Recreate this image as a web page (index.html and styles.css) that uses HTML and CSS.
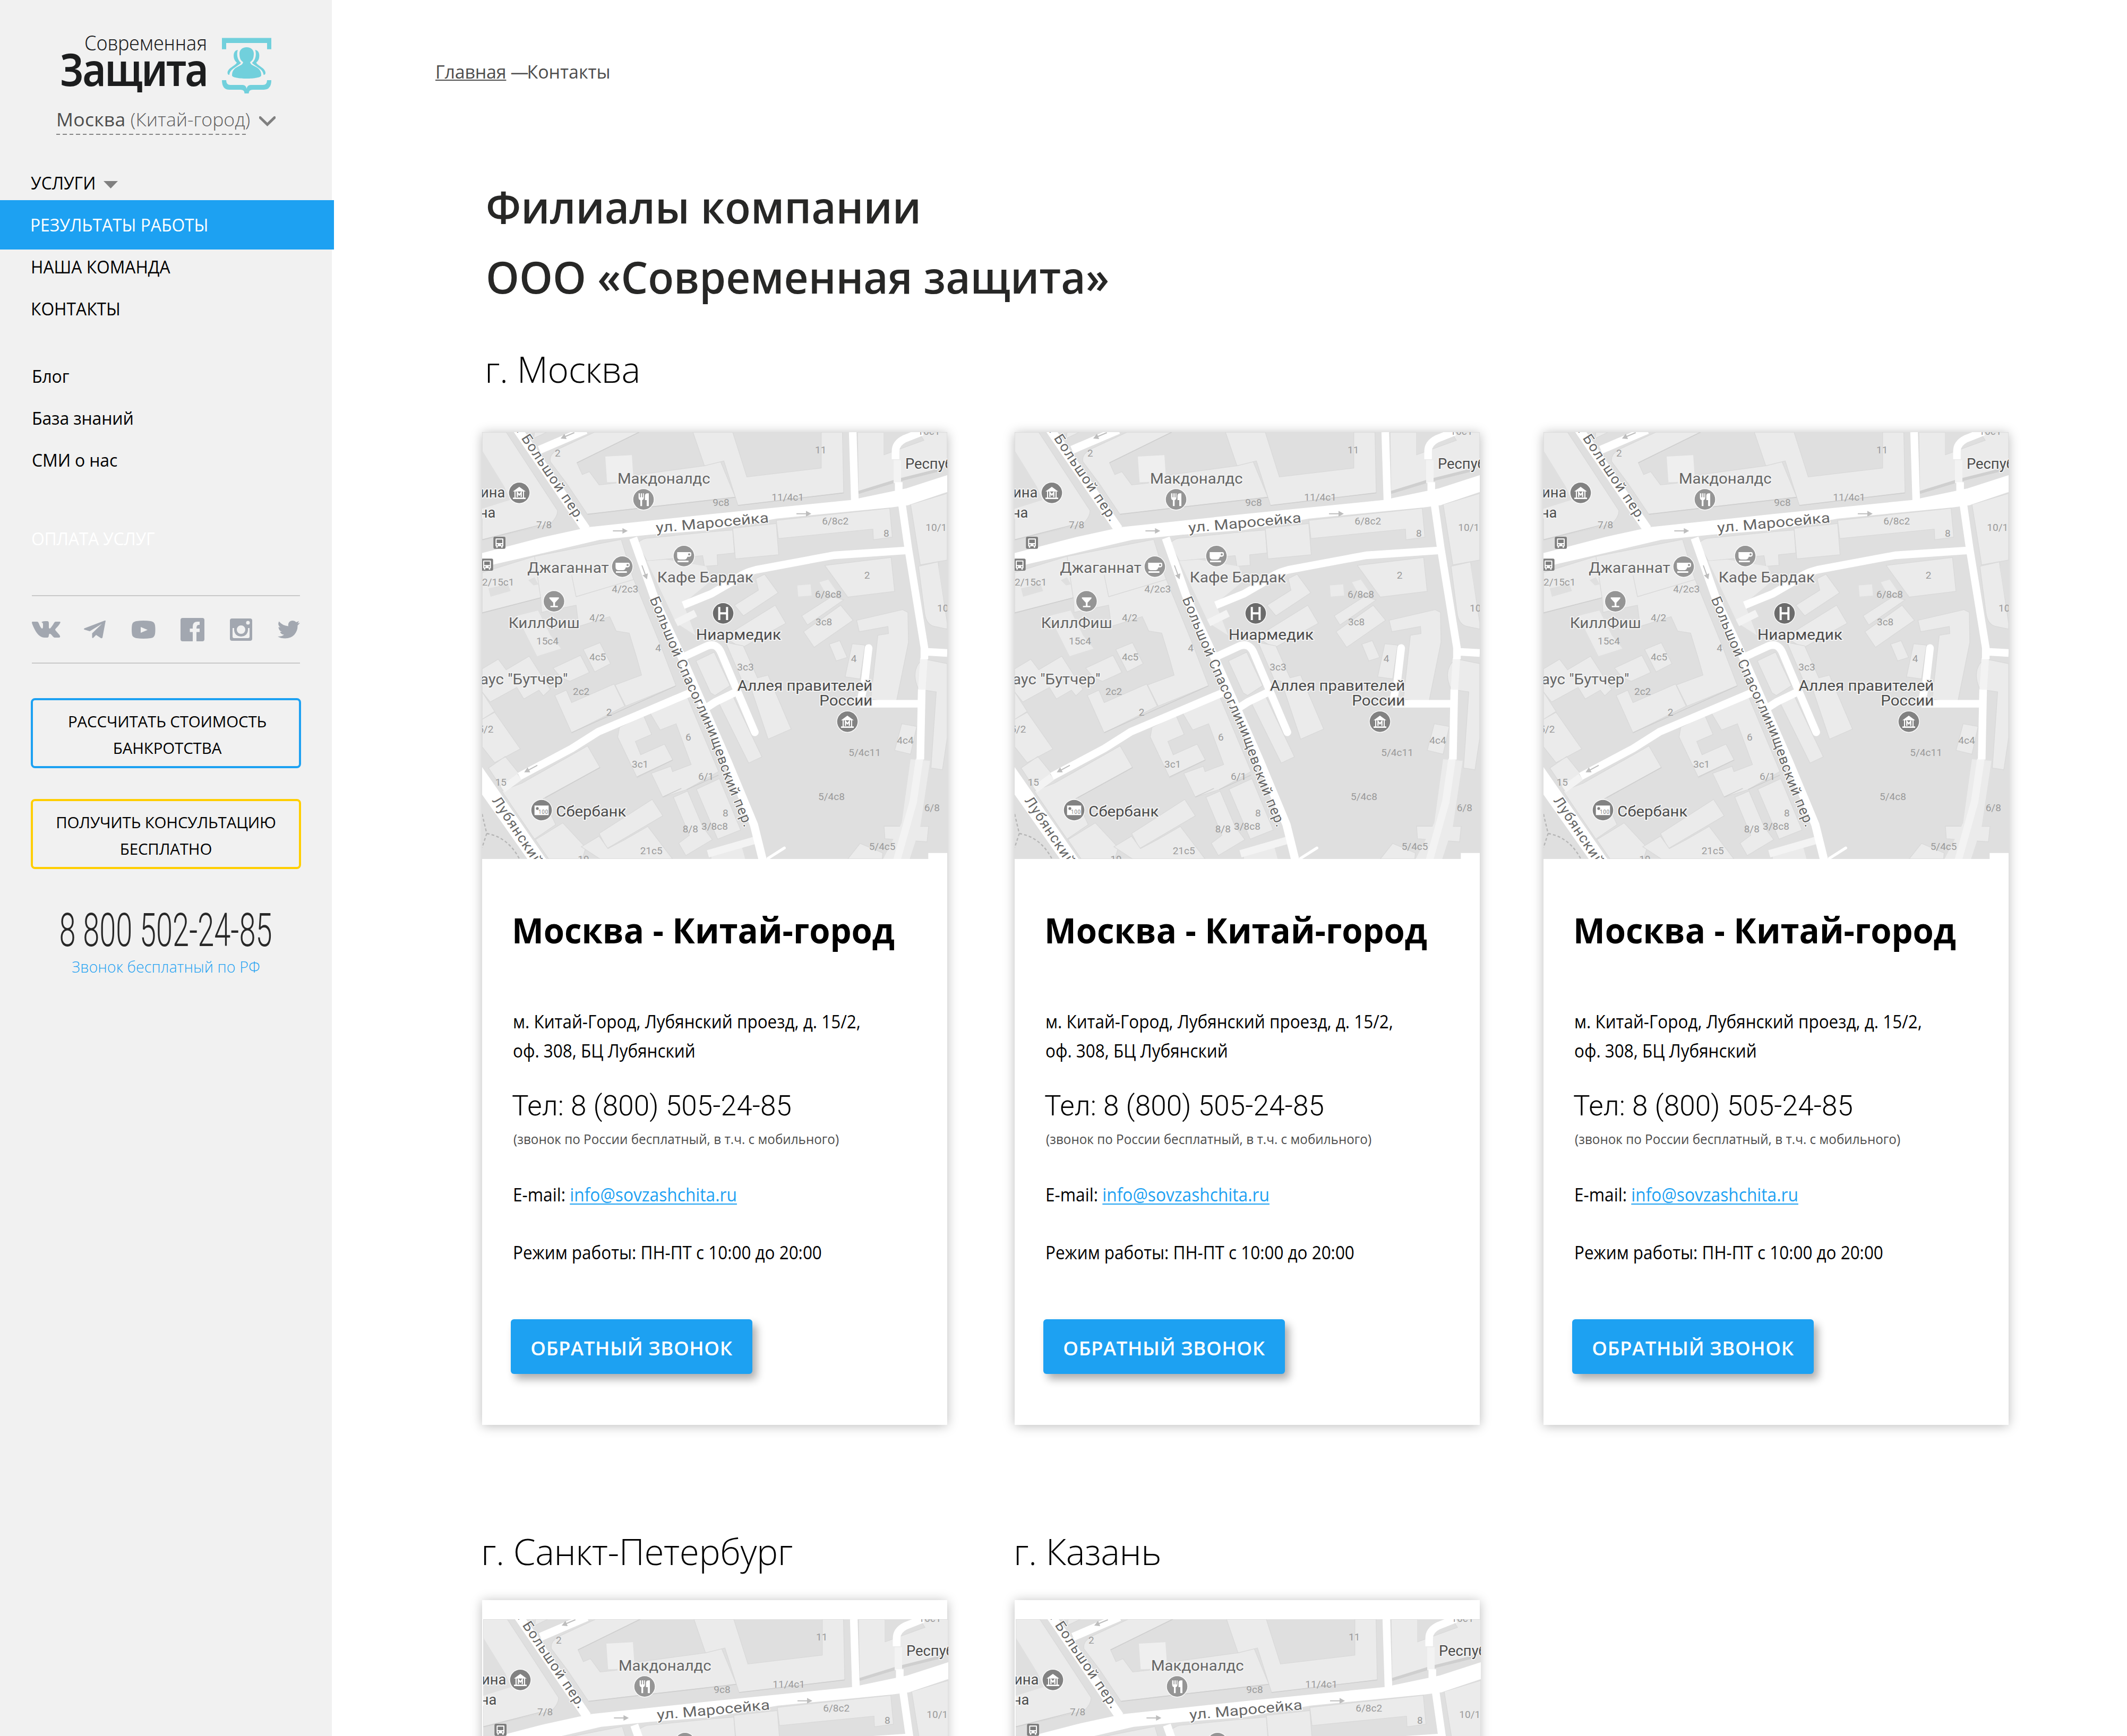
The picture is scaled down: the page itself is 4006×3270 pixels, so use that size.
FILE: index.html
```html
<!DOCTYPE html>
<html lang="ru">
<head>
<meta charset="utf-8">
<title>Контакты — Современная защита</title>
<link rel="stylesheet" href="styles.css">
</head>
<body>
<svg class="defs" width="0" height="0" aria-hidden="true">
  <defs>
    <path id="p-bolshoy" d="M232,12 L292,104 L600,560"/>
    <path id="p-spas" d="M1000,985 L1150,1345 L1340,1760 L1430,2020 L1545,2300"/>
    <path id="p-lub" d="M108,2124 L400,2560"/>
    <g id="museum"><circle r="62" fill="#fff"/><circle r="58" fill="#828282"/><path d="M-36,-8 L0,-34 L36,-8 Z M-27,-8 h6 v36 h-6 z M21,-8 h6 v36 h-6 z M-36,27 h72 v8 h-72 z" fill="#fff"/><path d="M-11,24 V-2 L0,12 L11,-2 V24" fill="none" stroke="#fff" stroke-width="7"/></g>
    <g id="cup"><circle r="62" fill="#fff"/><circle r="58" fill="#959595"/><path d="M-38,-22 h72 q8,0 8,8 v6 q0,10 -12,12 h-10 q-4,16 -18,16 h-22 q-18,0 -18,-18 z M-36,26 h62 v9 h-62 z" fill="#fff"/><circle cx="30" cy="-9" r="6" fill="#959595"/></g>
    <g id="bus"><rect width="68" height="68" rx="8" fill="#7d7d7d"/><path d="M12,14 q0,-4 4,-4 h36 q4,0 4,4 v40 h-4 v8 h-8 v-8 h-20 v8 h-8 v-8 h-4 z" fill="#fff"/><rect x="18" y="16" width="32" height="20" fill="#7d7d7d"/><circle cx="22" cy="46" r="4" fill="#7d7d7d"/><circle cx="46" cy="46" r="4" fill="#7d7d7d"/></g>
    <path id="arrow" d="M0,-3 H54 V-16 L84,0 L54,16 V3 H0 Z" fill="#bdbdbd"/>
  </defs>
  <symbol id="map" viewBox="54 42 2628 2412">
    <rect x="54" y="42" width="2628" height="2412" fill="#dfdfdf"/>
    <g fill="#ebebeb" stroke="#d9d9d9" stroke-width="4">
      <path d="M54,42 H190 L480,485 Q482,520 440,560 L54,652 Z"/>
      <path d="M345,78 L350,42 H420 Z"/>
      <path d="M440,210 Q430,170 480,140 L690,42 H942 L590,215 L620,282 L660,265 L715,340 L810,330 V300 L1310,232 L1400,205 L1485,410 L825,485 L650,508 L530,330 Z"/>
      <path d="M1245,42 H1470 L1550,295 L1970,245 V42 H2090 L2097,385 L1500,457 L1485,410 L1420,205 L1310,232 Z"/>
      <path d="M2175,42 H2325 V170 L2550,88 L2520,42 H2682 V240 L2180,388 Z"/>
      <path d="M54,835 L345,745 L840,648 L905,860 L1060,1240 L1150,1475 L865,1590 L805,1470 L955,1415 L930,1325 L885,1178 L812,1166 L775,1085 L600,1140 L585,1020 L390,1060 L385,978 L54,1065 Z"/>
      <path d="M350,742 L385,978 M585,972 L910,875 M585,972 L560,850" fill="none"/>
      <path d="M250,1080 L370,1050 L440,1190 L500,1265 L365,1308 Z" stroke="none"/>
      <path d="M930,670 Q960,640 1000,640 L1350,605 L1470,595 L1480,725 L1382,735 L1385,795 L1310,800 L1300,740 L1090,760 L985,770 Z"/>
      <path d="M1090,762 L1320,800 L1350,880 L1190,1010 L1260,1190 L1150,1120 L985,770 Z" stroke="none"/>
      <path d="M1470,585 L1716,558 L1730,735 L1485,758 Z"/>
      <path d="M1716,540 L2357,472 L2372,635 L2265,650 L2262,590 L1728,643 Z"/>
      <path d="M2475,450 L2682,388 V765 L2530,792 Z"/>
      <path d="M2520,800 L2630,775 L2682,1120 V1155 L2610,1140 Q2565,1130 2555,1070 Z"/>
      <path d="M1990,795 L2365,750 L2385,942 L2120,974 Z"/>
      <path d="M1835,908 L1910,902 L1916,965 L1840,971 Z M1960,890 L2010,875 L2062,950 L2000,962 Z" stroke="none"/>
      <path d="M1600,870 L1650,845 L1727,950 L1530,1080 L1480,1020 L1615,935 Z"/>
      <path d="M1420,1200 L1710,1020 L1770,1122 L1520,1262 Z"/>
      <path d="M1860,1080 L2030,970 L2097,990 L1892,1132 Z M1870,1170 L2080,1020 L2150,1105 L1930,1258 Z"/>
      <path d="M2170,1105 L2430,1045 L2460,1060 L2463,1230 L2392,1580 L2250,1550 L2290,1190 L2350,1180 L2347,1140 L2185,1170 Z"/>
      <path d="M2015,1240 L2075,1220 L2117,1315 L2055,1335 Z M2145,1238 L2218,1245 L2190,1437 L2105,1425 Z"/>
      <path d="M1430,1230 L1530,1250 L1610,1430 L1670,1415 L1800,1720 L1670,1777 L1560,1450 L1520,1440 Z"/>
      <path d="M1390,1570 L1470,1530 L1635,1877 L1560,1912 Z"/>
      <path d="M1262,1335 L1365,1285 L1455,1475 L1370,1530 L1345,1515 Z"/>
      <path d="M54,1380 L145,1325 L190,1385 L320,1308 L440,1495 L400,1532 L375,1500 L290,1550 L250,1485 L100,1567 L54,1510 Z"/>
      <path d="M54,1510 L125,1620 L54,1665 Z M54,1665 L125,1625 L270,1832 L125,1910 L54,1820 Z M90,1940 L185,1875 L262,1970 L170,2060 Z"/>
      <path d="M455,1375 L610,1303 L660,1400 L550,1450 L500,1430 Z M625,1270 L720,1232 L780,1350 L690,1397 Z"/>
      <path d="M465,1530 L530,1500 L560,1570 L800,1465 L860,1590 L560,1742 Z"/>
      <path d="M830,1710 L965,1640 L1012,1750 L920,1790 L950,1865 L1085,1805 L1132,1895 L930,1995 L820,1765 Z"/>
      <path d="M1000,1625 L1210,1530 L1390,1960 L1210,2062 L1075,2105 L1010,1970 L1120,1930 L1130,1960 L1235,1920 L1150,1690 L1060,1725 Z"/>
      <path d="M165,2070 L280,2025 L650,1815 L720,1937 L400,2112 L470,2260 L350,2342 Z"/>
      <path d="M355,2345 L510,2250 L640,2390 L620,2454 H430 Z M715,2310 L1015,2117 L1075,2210 L760,2395 Z"/>
      <path d="M615,2385 L715,2325 L765,2395 L860,2345 L990,2270 L1130,2454 H720 Z"/>
      <path d="M1135,2105 L1215,2070 L1300,2270 L1355,2345 L1205,2435 L1165,2365 L1225,2320 Z M1265,2060 L1395,2000 L1515,2290 L1385,2342 Z"/>
      <path d="M2425,1690 L2510,1705 L2475,1862 L2385,1840 Z"/>
      <path d="M2325,2268 L2577,2270 L2568,2357 L2330,2340 Z M2120,2454 L2190,2366 L2318,2420 L2315,2454 Z"/>
      <path d="M2475,1890 L2585,1900 L2530,2270 L2470,2454 H2320 L2425,2250 Z" stroke="none"/>
      <path d="M1350,2420 L1520,2380 L1540,2454 H1350 Z" stroke="none"/>
    </g>
    <g fill="#dfdfdf">
      <path d="M54,145 L180,350 L212,425 L54,475 Z"/>
      <path d="M90,925 L200,900 L215,940 L102,972 Z M315,878 L350,862 L372,902 L345,908 Z M865,650 L840,645 L930,895 L955,880 Z"/>
      <path d="M2325,42 H2395 L2372,150 L2325,168 Z"/>
      <path d="M2630,800 L2682,780 V1090 Z"/>
    </g>
    <path d="M750,180 L900,172 L910,320 L760,325 Z" fill="#efefef"/>
    <g fill="none" stroke="#cfcfcf" stroke-width="5">
      <path d="M590,215 L942,42 M650,506 L1485,410 M54,650 L370,570 M54,1063 L385,978 M1500,456 L2097,385 M560,1740 L1148,1476 M410,2108 L720,1937 M930,1990 L1130,1895 M1075,2104 L1180,2055 M1210,2062 L1390,1980"/>
      <path d="M2180,383 L2400,315 L2640,255" stroke-width="17"/>
    </g>
    <g fill="none" stroke="#f3f3f3" stroke-width="42">
      <path d="M2400,200 V330 M2550,1320 L2538,1510 M2525,1890 L2490,2130 L2395,2470 M1330,2425 L1590,2350 M1150,1120 L1260,1065"/>
      <path d="M170,2060 L265,1990"/>
    </g>
    <path d="M2570,1328 L2682,1350 V1770 L2655,1950 L2590,1940 L2620,1510 L2520,1495 Q2480,1410 2520,1350 Q2540,1325 2570,1328 Z" fill="#ebebeb" stroke="#d9d9d9" stroke-width="4"/>
    <path d="M2550,1325 L2538,1505" stroke="#f3f3f3" stroke-width="42"/>
    <g fill="none" stroke="#fff" stroke-width="43" stroke-linejoin="round">
      <path d="M250,20 L640,590" stroke-width="52"/>
      <path d="M378,142 L640,30" stroke-width="46"/>
      <path d="M2148,42 L2160,430 M2390,195 V150 Q2390,105 2440,80 L2540,40 M2408,325 V400"/>
      <path d="M2425,440 L2462,700 L2553,1260 V1325 M2560,1283 L2682,1290 M2538,1497 L2530,1892"/>
      <path d="M2460,710 L2040,738 L1600,820 Q1520,840 1480,880 L1350,955 L1190,1020"/>
      <path d="M908,640 L1035,1000 L1190,1330 L1370,1740 L1440,1900 L1590,2260 L1642,2470" stroke-width="46"/>
      <path d="M265,1987 L560,1830 L710,1735 L1000,1612 L1240,1510 M1320,1600 L1375,1565 L1490,1510"/>
      <path d="M1200,1308 L1325,1250 Q1380,1230 1405,1290 L1595,1738" stroke-linecap="round"/>
      <path d="M2238,1262 L2215,1460 L2192,1560" stroke-linecap="round"/>
      <path d="M2190,1577 H2540"/>
      <path d="M1670,2450 L1762,2392" stroke-width="16" stroke-linecap="round"/>
    </g>
    <path d="M54,725 L400,635 L660,578 L1350,505 L2140,425 L2210,410 L2450,360 L2682,285 V380 L2460,455 L2360,468 L1720,530 L1350,595 L1000,622 L720,650 L400,725 L54,805 Z" fill="#fff"/>
    <path d="M54,1935 L415,2454 H310 L54,2090 Z M2575,2420 H2682 V2454 H2575 Z" fill="#fff"/>
    <path d="M54,2200 L80,2310 L54,2390 M80,2310 Q200,2330 265,2454" fill="none" stroke="#b5b5b5" stroke-width="7" stroke-dasharray="16 12"/>
    <use href="#arrow" x="793" y="600"/><use href="#arrow" x="1830" y="503"/>
    <use href="#arrow" transform="translate(575 45) rotate(157)"/>
    <use href="#arrow" transform="translate(957 795) rotate(70)"/>
    <use href="#arrow" transform="translate(366 1925) rotate(152)"/>

    <g class="map-num">
      <text x="465" y="180">2</text><text x="360" y="585">7/8</text><text x="54" y="910">2/15с1</text><text x="787" y="948">4/2с3</text><text x="660" y="1110">4/2</text><text x="360" y="1243">15с4</text>
      <text x="1357" y="458">9с8</text><text x="1690" y="428">11/4с1</text><text x="1935" y="163">11</text><text x="1975" y="565">6/8с2</text><text x="2322" y="633">8</text><text x="2560" y="600">10/1</text><text x="2213" y="870">2</text><text x="1935" y="978">6/8с8</text><text x="1938" y="1133">3с8</text><text x="2625" y="1055">10</text><text x="2515" y="57">16с1</text>
      <text x="660" y="1333">4с5</text><text x="1033" y="1282">4</text><text x="567" y="1528">2с2</text><text x="755" y="1645">2</text><text x="118" y="1740" text-anchor="end">5/2</text><text x="1203" y="1785">6</text><text x="900" y="1938">3с1</text><text x="1275" y="2008">6/1</text><text x="128" y="2040">15</text><text x="1187" y="2305">8/8</text><text x="1293" y="2290">3/8с8</text><text x="947" y="2428">21с5</text><text x="595" y="2474">19</text>
      <text x="1495" y="1390">3с3</text><text x="2138" y="1340">4</text><text x="2398" y="1802">4с4</text><text x="2125" y="1872">5/4с11</text><text x="1953" y="2120">5/4с8</text><text x="1413" y="2215">8</text><text x="2552" y="2183">6/8</text><text x="2240" y="2402">5/4с5</text>
    </g>
    <g class="map-street">
      <text textLength="640" lengthAdjust="spacingAndGlyphs" transform="translate(1038 610) rotate(-5.2)">ул. Маросейка</text>
      <text><textPath href="#p-bolshoy" textLength="650">й Большой пер.</textPath></text>
      <text><textPath href="#p-spas" textLength="1400">Большой Спасоглинищевский пер.</textPath></text>
      <text><textPath href="#p-lub" textLength="445">Лубянский</textPath></text>
    </g>
    <g class="map-place">
      <text x="819" y="332" textLength="524" lengthAdjust="spacingAndGlyphs">Макдоналдс</text>
      <text class="map-dark" x="184" y="412" text-anchor="end">ина</text><text class="map-dark" x="130" y="525" text-anchor="end">на</text>
      <text x="310" y="838" textLength="460" lengthAdjust="spacingAndGlyphs">Джаганнат</text><text x="1043" y="890" textLength="544" lengthAdjust="spacingAndGlyphs">Кафе Бардак</text><text x="203" y="1148" textLength="402" lengthAdjust="spacingAndGlyphs">КиллФиш</text>
      <text class="map-dark" x="2445" y="250">Респуб</text>
      <text class="map-dark" x="1263" y="1215" textLength="480" lengthAdjust="spacingAndGlyphs">Ниармедик</text>
      <text x="42" y="1467" textLength="496" lengthAdjust="spacingAndGlyphs">аус "Бутчер"</text>
      <text class="map-dark" x="472" y="2213" textLength="396" lengthAdjust="spacingAndGlyphs">Сбербанк</text>
      <text class="map-dark" x="1496" y="1502" textLength="764" lengthAdjust="spacingAndGlyphs">Аллея правителей</text><text class="map-dark" x="1960" y="1588" textLength="300" lengthAdjust="spacingAndGlyphs">России</text>
    </g>
    <use href="#museum" x="264" y="385"/><use href="#museum" x="2118" y="1678"/>
    <use href="#cup" x="846" y="802"/><use href="#cup" x="1194" y="742"/>
    <use href="#bus" x="118" y="633"/><use href="#bus" x="48" y="757"/>
    <g transform="translate(966 422)"><circle r="62" fill="#fff"/><circle r="58" fill="#959595"/><path d="M-28,-34 v24 q0,12 10,14 V38 h10 V4 q10,-2 10,-14 v-24 h-5 v22 h-5 v-22 h-7 v22 h-5 v-22 z M8,-20 q0,-14 14,-14 h8 V38 h-12 V4 h-10 z" fill="#fff"/></g>
    <g transform="translate(460 998)"><circle r="62" fill="#fff"/><circle r="58" fill="#959595"/><path d="M-26,-22 h54 v6 l-22,24 v18 h16 v7 h-42 v-7 h16 V8 l-22,-24 z" fill="#fff"/></g>
    <g transform="translate(1416 1066)"><circle r="62" fill="#fff"/><circle r="58" fill="#6b6b6b"/><path d="M-28,-36 h12 v30 h32 v-30 h12 v74 h-12 V6 h-32 v32 h-12 z" fill="#fff"/></g>
    <g transform="translate(390 2178)"><circle r="62" fill="#fff"/><circle r="58" fill="#828282"/><rect x="-40" y="-26" width="80" height="54" fill="#fff"/><circle cx="-24" cy="-9" r="8" fill="#828282"/><text x="-18" y="20" font-family="Roboto, sans-serif" font-size="30" textLength="54" fill="#828282">100</text></g>
  </symbol>
</svg>

<div class="layout">
  <aside class="sidebar">
    <svg class="logo" viewBox="0 60 625 125" width="625" height="125" role="img" aria-label="Современная Защита">
      <text class="logo-top" x="159" y="94.5" textLength="231" lengthAdjust="spacingAndGlyphs">Современная</text>
      <text class="logo-main" x="113" y="162" textLength="277" lengthAdjust="spacingAndGlyphs">Защита</text>
      <g fill="#71d0dc">
        <path d="M418,71.5 H511 V92.7 H503 V81 H426 V92.7 H418 Z"/>
        <path d="M418,151 H426 Q426,160 434,160 H457 Q463,160 464.500,167 Q466,160 472,160 H495 Q503,160 503,151 H511 Q511,169 497,169 H476 Q468.500,169 468.500,176 H460.500 Q460.500,169 453,169 H432 Q418,169 418,151 Z"/>
        <path d="M464.500,89 C473,89 478,94 478,101 C478,109 476,114 471,117 C472,121 474,122 480,125 C488,129 492,133 492,142 C492,150 437,150 437,142 C437,133 441,129 449,125 C455,122 457,121 458,117 C453,114 451,109 451,101 C451,94 456,89 464.500,89 Z"/>
        <path d="M448,94 C440,95 439,104 441,111 C442,114 444,116 446,118 C443,124 429,128 428.500,137 C428.500,140 430,141 432,141 C433,130 445,127 454,118.500 C447,113 445,102 448,94 Z"/>
        <path d="M480.500,94 C488.500,95 489.500,104 487.500,111 C486.500,114 484.500,116 482.500,118 C485.500,124 499.500,128 500,137 C500,140 498.500,141 496.500,141 C495.500,130 483.500,127 474.500,118.500 C481.500,113 483.500,102 480.500,94 Z"/>
      </g>
    </svg>

    <div class="city">
      <a class="city-link"><span class="city-name">Москва</span> <span class="city-area">(Китай-город)</span></a>
      <svg width="31" height="20" viewBox="0 0 31 20"><path d="M2,2.500 L15.500,15.500 L29,2.500" fill="none" stroke="#808080" stroke-width="5" stroke-linecap="round"/></svg>
    </div>

    <nav class="nav">
      <a class="nav-item"><span>УСЛУГИ</span> <svg class="caret" width="27" height="14" viewBox="0 0 27 14"><path d="M0,0 H27 L13.500,14 Z" fill="#808080"/></svg></a>
      <a class="nav-item active"><span>РЕЗУЛЬТАТЫ РАБОТЫ</span></a>
      <a class="nav-item"><span>НАША КОМАНДА</span></a>
      <a class="nav-item"><span>КОНТАКТЫ</span></a>
    </nav>
    <nav class="subnav">
      <a>Блог</a><a>База знаний</a><a>СМИ о нас</a>
    </nav>
    <a class="pay">ОПЛАТА УСЛУГ</a>

    <div class="social">
      <svg width="54" height="32" viewBox="0 0 54 32"><path d="M1,1 H10 Q12,1 13,4 Q16,12 19,14 Q21,14 21,10 V6 Q21,3 18,2 Q20,0 25,0 H29 Q32,0 32,4 V12 Q33,16 36,12 Q40,7 42,3 Q43,1 45,1 H52 Q55,1 53,4 Q51,8 45,14 Q43,16 45,18 L52,26 Q55,31 51,31 H43 Q41,31 38,27 Q33,21 32,26 Q32,31 29,31 H24 Q13,31 5,15 Q1,7 0,3 Q0,1 1,1 Z"/></svg>
      <svg width="42" height="34" viewBox="0 0 42 34"><path d="M41,0 L35,32 Q34,34 32,33 L23,27 L17,33 Q15,33 15.500,30 V24 L34,6 L11,20 L1,17 Q-1,16 1,14.500 L39,0 Q41,-1 41,0 Z"/></svg>
      <svg width="45" height="34" viewBox="0 0 45 34"><path fill-rule="evenodd" d="M9,1 Q22,-1 36,1 Q43,2 44,9 Q45,17 44,25 Q43,32 36,33 Q22,35 9,33 Q1,32 .500,25 Q-.500,17 .500,9 Q1,2 9,1 Z M17,12 V23 L30,17.500 Z"/></svg>
      <svg width="45" height="44" viewBox="0 0 45 44"><path d="M4,0 H41 Q45,0 45,4 V40 Q45,44 41,44 H30 V26.500 H36 V20 H30 Q30,13 34,13 H36 V7 H32 Q23,7 23,16 V20 H17.500 V26.500 H23 V44 H4 Q0,44 0,40 V4 Q0,0 4,0 Z"/></svg>
      <svg width="42" height="42" viewBox="0 0 42 42"><path fill-rule="evenodd" d="M4,0 H38 Q42,0 42,4 V38 Q42,42 38,42 H4 Q0,42 0,38 V4 Q0,0 4,0 Z M5,18 V34 Q5,37 8,37 H34 Q37,37 37,34 V18 H34 Q35,33 21,34 Q7,33 8,18 Z M21,13 A8,8 0 1 0 21,29 A8,8 0 1 0 21,13 Z M34,4.500 A3.500,3.500 0 1 0 34,11.500 A3.500,3.500 0 1 0 34,4.500 Z"/></svg>
      <svg width="42" height="34" viewBox="0 0 42 34"><path d="M42,4 Q40,7 37.500,9 Q38,19 31,27 Q25,33 14,33.500 Q6,33.500 0,30 Q8,30 12,26.500 Q6,26 4.500,21 H8 Q2,19 1.500,12 L5,13 Q-1,8 2.500,1.500 Q9,9.500 20,10.500 Q19,3 25,.5 Q31,-1 35,3 L40,1 Q39,4 37,5.500 Z"/></svg>
    </div>

    <div class="actions">
      <a class="outline blue">РАССЧИТАТЬ СТОИМОСТЬ<br>БАНКРОТСТВА</a>
      <a class="outline yellow">ПОЛУЧИТЬ КОНСУЛЬТАЦИЮ<br>БЕСПЛАТНО</a>
    </div>
    <svg class="phone" width="625" height="80" viewBox="0 1712 625 80"><text x="111.500" y="1782" textLength="401" lengthAdjust="spacingAndGlyphs">8 800 502-24-85</text></svg>
    <p class="phone-note">Звонок бесплатный по РФ</p>
  </aside>

  <main class="main">
    <div class="crumbs"><a>Главная</a> <span><span class="dash">—</span>Контакты</span></div>
    <h1 class="title">Филиалы компании<br>ООО «Современная защита»</h1>
    <h2 class="town town-first">г. Москва</h2>
    <div class="grid">
      <article class="card">
        <svg class="map"><use href="#map"/></svg>
        <div class="card-body">
          <h3>Москва - Китай-город</h3>
          <p class="addr">м. Китай-Город, Лубянский проезд, д. 15/2,<br>оф. 308, БЦ Лубянский</p>
          <p class="tel">Тел: 8 (800) 505-24-85</p>
          <p class="note">(звонок по России бесплатный, в т.ч. с мобильного)</p>
          <p class="mail">E-mail: <a>info@sovzashchita.ru</a></p>
          <p class="hours">Режим работы: ПН-ПТ с 10:00 до 20:00</p>
          <a class="call">ОБРАТНЫЙ ЗВОНОК</a>
        </div>
      </article>
      <article class="card">
        <svg class="map"><use href="#map"/></svg>
        <div class="card-body">
          <h3>Москва - Китай-город</h3>
          <p class="addr">м. Китай-Город, Лубянский проезд, д. 15/2,<br>оф. 308, БЦ Лубянский</p>
          <p class="tel">Тел: 8 (800) 505-24-85</p>
          <p class="note">(звонок по России бесплатный, в т.ч. с мобильного)</p>
          <p class="mail">E-mail: <a>info@sovzashchita.ru</a></p>
          <p class="hours">Режим работы: ПН-ПТ с 10:00 до 20:00</p>
          <a class="call">ОБРАТНЫЙ ЗВОНОК</a>
        </div>
      </article>
      <article class="card">
        <svg class="map"><use href="#map"/></svg>
        <div class="card-body">
          <h3>Москва - Китай-город</h3>
          <p class="addr">м. Китай-Город, Лубянский проезд, д. 15/2,<br>оф. 308, БЦ Лубянский</p>
          <p class="tel">Тел: 8 (800) 505-24-85</p>
          <p class="note">(звонок по России бесплатный, в т.ч. с мобильного)</p>
          <p class="mail">E-mail: <a>info@sovzashchita.ru</a></p>
          <p class="hours">Режим работы: ПН-ПТ с 10:00 до 20:00</p>
          <a class="call">ОБРАТНЫЙ ЗВОНОК</a>
        </div>
      </article>
    </div>
    <div class="grid grid-second">
      <section>
        <h2 class="town">г. Санкт-Петербург</h2>
        <article class="card card-gap"><svg class="map"><use href="#map"/></svg></article>
      </section>
      <section>
        <h2 class="town">г. Казань</h2>
        <article class="card card-gap"><svg class="map"><use href="#map"/></svg></article>
      </section>
    </div>
  </main>
</div>
</body>
</html>
```
FILE: styles.css
```css
* { box-sizing: border-box; }
body, h1, h2, h3, p { margin: 0; }
body { background: #fff; color: #000; font-family: "Open Sans", "Noto Sans", sans-serif; }
svg { display: block; }
.defs { position: absolute; }
.layout { display: flex; height: 3270px; overflow: hidden; }

/* Sidebar */
.sidebar { width: 625px; flex: none; background: #f1f1f1; padding-top: 60px; }
.logo text { fill: #1c1d1e; }
.logo-top { font-size: 38px; font-weight: 300; font-family: "Noto Sans", sans-serif; }
.logo-main { font-size: 85px; font-weight: 600; font-family: "Noto Sans", sans-serif; letter-spacing: -3px; }
.city { display: flex; align-items: flex-start; margin: 14px 0 0 106px; }
.city svg { margin: 20px 0 0 20px; }
.city-link {
  width: 362px; height: 55px; line-height: 50px; font-size: 35.5px; white-space: nowrap;
  background: repeating-linear-gradient(90deg, #858585 0 7.5px, transparent 7.5px 12.5px) 0 100% / 100% 2px no-repeat;
}
.city-name { color: #4d4d4d; letter-spacing: .3px; }
.city-area { color: #606060; font-weight: 300; }
.nav { margin-top: 71px; }
.nav-item { display: flex; align-items: center; width: 625px; padding-left: 58px; font-size: 33px; line-height: 40px; }
.nav-item span { transform: scaleX(.963); transform-origin: 0 0; }
.nav-item + .nav-item { margin-top: 39px; }
.caret { margin: 5px 0 0 10px; }
.nav .active { width: 629px; margin-top: 12px; padding: 27px 0 26px 57px; background: #1da1f2; color: #fff; }
.nav .active + .nav-item { margin-top: 13px; }
.subnav { display: flex; flex-direction: column; gap: 39px; margin: 87px 0 0 60px; font-size: 32px; line-height: 40px; letter-spacing: -.15px; }
.pay { display: block; margin: 108px 0 0 59px; font-size: 32px; line-height: 40px; letter-spacing: -.3px; color: #fff; }
.social {
  display: flex; align-items: center; justify-content: space-between;
  width: 505px; height: 129px; margin: 86px 0 0 60px; padding-top: 1px;
  border-top: 2px solid #c9c9c9; border-bottom: 2px solid #c9c9c9;
}
.social svg { fill: #a2a7b0; }
.social svg:first-child { margin-right: -4px; }
.actions { display: flex; flex-direction: column; gap: 58px; margin: 65px 0 0 58px; }
.outline {
  width: 509px; height: 132px; padding-top: 15px; border: 4px solid; border-radius: 8px;
  font-size: 29.5px; line-height: 50px; letter-spacing: -.15px; text-align: center; white-space: nowrap;
}
.blue { border-color: #1da1f2; padding-left: 5px; }
.yellow { border-color: #ffce00; }
.phone { margin-top: 75px; }
.phone text { font: 350 87px Roboto, sans-serif; fill: #272727; }
.phone-note { margin-top: 9px; font-size: 28.5px; font-weight: 300; line-height: 40px; letter-spacing: .14px; text-align: center; color: #1da1f2; }

/* Content */
.main { flex: none; width: 3381px; padding: 113px 0 0 283px; }
.crumbs { display: flex; gap: 8px; margin-left: -88px; font-size: 34px; line-height: 44px; color: #4d4d4d; }
.crumbs a { text-decoration: underline; text-decoration-thickness: 2px; text-underline-offset: 2px; letter-spacing: -.2px; }
.dash { letter-spacing: -3px; }
.title { margin: 166px 0 0 7px; font-size: 83px; font-weight: 600; line-height: 132px; transform: scaleX(.965); transform-origin: 0 0; color: #272726; }
.town { font-size: 67.5px; font-weight: 300; line-height: 90px; letter-spacing: -.45px; white-space: nowrap; margin-left: -3px; }
.grid-second .town { margin-left: -2px; }
.town-first { margin: 63px 0 0 5px; }
.grid { display: grid; grid-template-columns: 1003px 996px 876px; margin-top: 74px; }
.card { width: 876px; height: 1870px; background: #fff; box-shadow: 0 2px 20px rgba(0, 0, 0, .27); }
.map { width: 876px; height: 804px; }
.card-body { padding: 88px 0 0 59px; white-space: nowrap; }
.card h3 { margin-left: -3px; font-size: 67px; font-weight: 700; line-height: 90px; transform: scaleX(.946); transform-origin: 0 0; }
.addr, .mail, .hours, .note { transform-origin: 0 0; transform: scaleX(.898); }
.addr { margin-top: 101px; margin-left: -1px; font-size: 35px; line-height: 54.6px; }
.tel { margin: 45px 0 0 -3px; font: 300 53px/64px Roboto, sans-serif; letter-spacing: .13px; }
.note { margin-top: 13px; font-size: 26px; line-height: 34px; color: #4d4d4d; transform: scaleX(.933); }
.mail { margin: 63px 0 0 -1px; font-size: 35px; line-height: 50px; transform: scaleX(.905); }
.mail a { color: #1da1f2; text-decoration: underline; text-decoration-thickness: 2px; text-underline-offset: 4px; text-decoration-skip-ink: none; }
.hours { margin: 59px 0 0 -1px; font-size: 35px; line-height: 50px; }
.call {
  display: block; width: 455px; height: 103px; margin: 101px 0 0 -5px; border-radius: 6px;
  background: #1da1f2; color: #fff; box-shadow: 8px 10px 16px rgba(0, 0, 0, .32);
  font-size: 36.5px; font-weight: 600; line-height: 108px; letter-spacing: .6px; text-align: center;
}
.grid-second { margin-top: 193px; }
.grid-second .card { margin-top: 47px; height: 1906px; }
.card-gap { padding: 36px 0 0 2px; }

/* Map labels */
.map-num { font: 57px Roboto, sans-serif; fill: #9a9a9a; }
.map-street, .map-place { font-family: Roboto, sans-serif; font-size: 82px; fill: #666; stroke: #f2f2f2; stroke-width: 12px; stroke-linejoin: round; paint-order: stroke; }
.map-street { stroke: #fff; font-size: 80px; stroke-width: 8px; }
.map-place .map-dark { fill: #4c4c4c; }
```
